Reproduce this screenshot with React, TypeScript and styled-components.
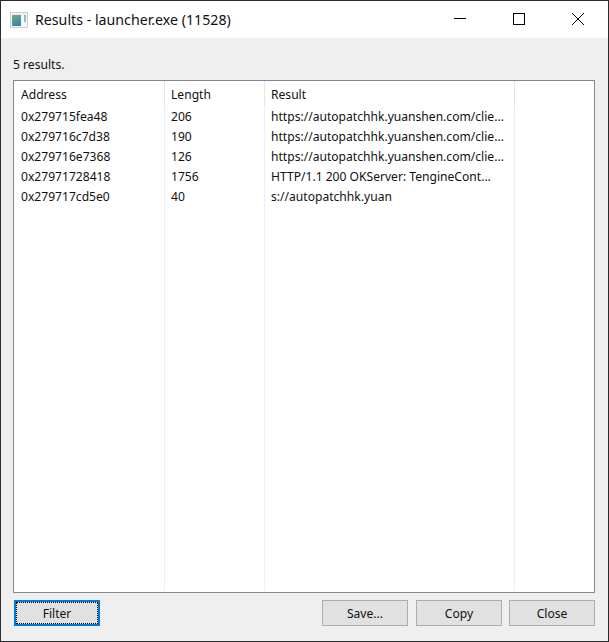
import styled, { createGlobalStyle } from "styled-components";

const GlobalStyle = createGlobalStyle`
  html, body {
    margin: 0;
    padding: 0;
    background: #efefef;
  }
`;

const Window = styled.div`
  box-sizing: border-box;
  width: 609px;
  height: 642px;
  display: flex;
  flex-direction: column;
  background: #efefef;
  border: 1px solid #2b2b2b;
  font-family: "Noto Sans", "Open Sans", sans-serif;
  font-size: 12.1px;
  color: #000;
  overflow: hidden;
`;

const TitleBar = styled.div`
  height: 37px;
  flex: none;
  display: flex;
  align-items: center;
  padding-right: 1px;
  background: #fff;
`;

const TitleIcon = styled.svg`
  width: 18px;
  height: 16px;
  margin-left: 9px;
  margin-right: 7px;
  flex: none;
`;

const TitleText = styled.div`
  flex: 1;
  font-size: 14.2px;
  color: #111;
  white-space: nowrap;
`;

const CaptionButton = styled.div`
  box-sizing: border-box;
  width: 59px;
  height: 37px;
  padding-bottom: 1px;
  display: flex;
  align-items: center;
  justify-content: center;
  flex: none;
`;

const Body = styled.div`
  flex: 1;
  min-height: 0;
  display: flex;
  flex-direction: column;
  padding: 0 13px 15px 12px;
`;

const Summary = styled.div`
  height: 42px;
  flex: none;
  display: flex;
  align-items: flex-end;
  padding-bottom: 7px;
  box-sizing: border-box;
  line-height: 16px;
  color: #111;
`;

const ListView = styled.div`
  flex: 1;
  min-height: 0;
  display: flex;
  background: #fff;
  border: 1px solid #828790;
`;

const Column = styled.div<{ $width: number; $inset: number }>`
  box-sizing: border-box;
  width: ${(props) => props.$width}px;
  padding-left: ${(props) => props.$inset}px;
  flex: none;
  display: flex;
  flex-direction: column;
  margin-bottom: 1px;
  border-right: 1px solid #e6f0fc;
`;

const HeaderCell = styled.div`
  box-sizing: border-box;
  height: 25px;
  margin-right: -1px;
  margin-bottom: 1px;
  padding-top: 2px;
  display: flex;
  align-items: center;
  border-right: 1px solid #e5e5e5;
  color: #111;
`;

const Cell = styled.div`
  height: 20px;
  line-height: 20px;
  white-space: nowrap;
  overflow: hidden;
  color: #111;
`;

const Footer = styled.div`
  height: 33px;
  flex: none;
  display: flex;
  align-items: flex-end;
  padding-left: 1px;
`;

const Button = styled.button<{ $focused?: boolean; $gap?: number }>`
  box-sizing: border-box;
  width: 86px;
  height: 26px;
  margin-left: ${(props) => props.$gap ?? 0}px;
  padding: 0;
  background: #e1e1e1;
  border: ${(props) => (props.$focused ? "2px solid #0078d7" : "1px solid #adadad")};
  outline: ${(props) => (props.$focused ? "1px dotted #000" : "none")};
  outline-offset: ${(props) => (props.$focused ? "-3px" : "0")};
  font-family: inherit;
  font-size: 12.1px;
  color: #111;
`;

const rows = [
  ["0x279715fea48", "206", "https://autopatchhk.yuanshen.com/clie..."],
  ["0x279716c7d38", "190", "https://autopatchhk.yuanshen.com/clie..."],
  ["0x279716e7368", "126", "https://autopatchhk.yuanshen.com/clie..."],
  ["0x27971728418", "1756", "HTTP/1.1 200 OKServer: TengineCont..."],
  ["0x279717cd5e0", "40", "s://autopatchhk.yuan"],
];

const columns = [
  { title: "Address", width: 151, inset: 7 },
  { title: "Length", width: 100, inset: 6 },
  { title: "Result", width: 250, inset: 6 },
];

const App = () => {
  return (
    <>
      <GlobalStyle />
      <Window>
        <TitleBar>
          <TitleIcon viewBox="0 0 18 16">
            <defs>
              <linearGradient id="pane" x1="0" y1="0" x2="0.4" y2="1">
                <stop offset="0" stopColor="#6fae8e" />
                <stop offset="1" stopColor="#3f86a8" />
              </linearGradient>
            </defs>
            <rect x="0.5" y="0.5" width="17" height="15" fill="#f6f6f6" stroke="#cfcfcf" />
            <rect x="2" y="2" width="14" height="1" fill="#e4e8ea" />
            <rect x="2" y="3" width="9" height="11" fill="url(#pane)" />
            <rect x="14" y="3" width="2" height="7" fill="#8fbcc8" />
          </TitleIcon>
          <TitleText>Results - launcher.exe (11528)</TitleText>
          <CaptionButton>
            <svg width="12" height="12" viewBox="0 0 12 12">
              <path d="M0 5.5H12" stroke="#000" fill="none" />
            </svg>
          </CaptionButton>
          <CaptionButton>
            <svg width="12" height="12" viewBox="0 0 12 12">
              <rect x="0.5" y="0.5" width="11" height="11" stroke="#000" fill="none" />
            </svg>
          </CaptionButton>
          <CaptionButton>
            <svg width="12" height="12" viewBox="0 0 12 12">
              <path d="M0 0L12 12M12 0L0 12" stroke="#000" fill="none" />
            </svg>
          </CaptionButton>
        </TitleBar>
        <Body>
          <Summary>5 results.</Summary>
          <ListView>
            {columns.map((column, index) => (
              <Column key={column.title} $width={column.width} $inset={column.inset}>
                <HeaderCell>{column.title}</HeaderCell>
                {rows.map((row) => (
                  <Cell key={row[0]}>{row[index]}</Cell>
                ))}
              </Column>
            ))}
          </ListView>
          <Footer>
            <Button $focused>Filter</Button>
            <Button $gap={222}>Save...</Button>
            <Button $gap={8}>Copy</Button>
            <Button $gap={7}>Close</Button>
          </Footer>
        </Body>
      </Window>
    </>
  );
};

export default App;
